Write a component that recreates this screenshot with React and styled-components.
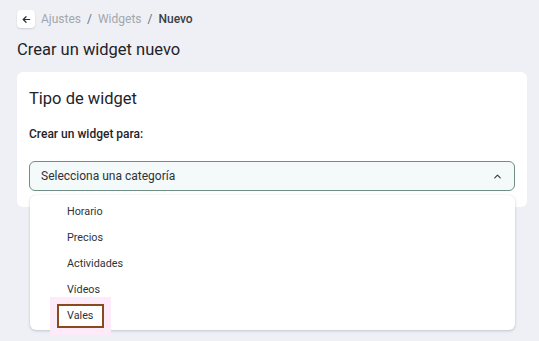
import React from "react";
import styled, { createGlobalStyle } from "styled-components";

const Global = createGlobalStyle`
  html, body { margin: 0; padding: 0; }
  body {
    background: #eef0f5;
    font-family: Roboto, "Liberation Sans", sans-serif;
    color: #1d2125;
    width: 539px;
    height: 341px;
    overflow: hidden;
  }
`;

const Page = styled.div`
  display: flex;
  flex-direction: column;
  padding: 10px 12px 0 17px;
`;

const Crumbs = styled.nav`
  display: flex;
  align-items: center;
  gap: 6px;
  height: 18px;
  font-size: 12px;
`;

const BackButton = styled.button`
  width: 18px;
  height: 18px;
  padding: 0;
  border: none;
  border-radius: 4px;
  background: #fff;
  box-shadow: 0 1px 2px rgba(0, 0, 0, 0.14);
  display: flex;
  align-items: center;
  justify-content: center;
`;

const Crumb = styled.span`
  color: ${(p) => (p.$current ? "#3a3f45" : "#a3a7ad")};
  font-weight: ${(p) => (p.$current ? 500 : 400)};
`;

const Sep = styled.span`
  color: #6b7077;
`;

const Title = styled.h1`
  margin: 11px 0 0;
  font-size: 16.5px;
  font-weight: 400;
  line-height: 22px;
  color: #1f2328;
`;

const Card = styled.section`
  margin-top: 11px;
  background: #fff;
  border-radius: 6px;
  padding: 16px 12px 16px;
  display: flex;
  flex-direction: column;
`;

const CardTitle = styled.h2`
  margin: 0;
  font-size: 16.5px;
  font-weight: 400;
  line-height: 22px;
  color: #1f2328;
`;

const Label = styled.div`
  margin-top: 16px;
  font-size: 12px;
  font-weight: 500;
  line-height: 16px;
  color: #1f2328;
`;

const Field = styled.div`
  position: relative;
  margin-top: 19px;
`;

const Select = styled.div`
  height: 30px;
  box-sizing: border-box;
  border: 1px solid #6f8e85;
  border-radius: 6px;
  background: #f4f9f9;
  display: flex;
  align-items: center;
  justify-content: space-between;
  padding: 0 11px 0 11px;
  font-size: 12px;
  color: #2e3338;
`;

const Menu = styled.ul`
  position: absolute;
  top: 34px;
  left: 1px;
  right: 0;
  margin: 0;
  padding: 4px 0 1px;
  list-style: none;
  background: #fff;
  border-radius: 6px;
  box-shadow: 0 1px 3px rgba(0, 0, 0, 0.18), 0 0 1px rgba(0, 0, 0, 0.1);
`;

const Item = styled.li`
  height: 26px;
  display: flex;
  align-items: center;
  padding-left: 27px;
  font-size: 10.8px;
  color: #2e3338;
`;

const ItemText = styled.span`
  padding: 3px 9px 3px 8px;
  border: 2px solid ${(p) => (p.$focused ? "#8a4a1e" : "transparent")};
  box-shadow: ${(p) => (p.$focused ? "0 0 0 7px #fdebfa" : "none")};
  line-height: 14px;
`;

const items = ["Horario", "Precios", "Actividades", "Vídeos", "Vales"];

export default function App() {
  return (
    <>
      <Global />
      <Page>
        <Crumbs>
          <BackButton aria-label="Volver">
            <svg width="11" height="11" viewBox="0 0 24 24" fill="none" stroke="#2a2e33" strokeWidth="2.6" strokeLinecap="round" strokeLinejoin="round">
              <path d="M19 12H5" />
              <path d="M11 6l-6 6 6 6" />
            </svg>
          </BackButton>
          <Crumb>Ajustes</Crumb>
          <Sep>/</Sep>
          <Crumb>Widgets</Crumb>
          <Sep>/</Sep>
          <Crumb $current>Nuevo</Crumb>
        </Crumbs>
        <Title>Crear un widget nuevo</Title>
        <Card>
          <CardTitle>Tipo de widget</CardTitle>
          <Label>Crear un widget para:</Label>
          <Field>
            <Select>
              <span>Selecciona una categoría</span>
              <svg width="11" height="11" viewBox="0 0 24 24" fill="none" stroke="#3a3f45" strokeWidth="2.6" strokeLinecap="round" strokeLinejoin="round">
                <path d="M6 15l6-6 6 6" />
              </svg>
            </Select>
            <Menu>
              {items.map((it) => (
                <Item key={it}>
                  <ItemText $focused={it === "Vales"}>{it}</ItemText>
                </Item>
              ))}
            </Menu>
          </Field>
        </Card>
      </Page>
    </>
  );
}
